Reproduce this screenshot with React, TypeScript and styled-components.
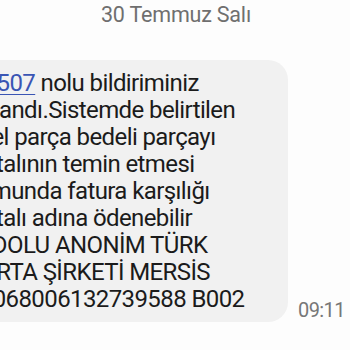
import React from "react";
import styled, { createGlobalStyle } from "styled-components";

const GlobalStyle = createGlobalStyle`
  html, body {
    margin: 0;
    padding: 0;
    background: #fdfdfd;
  }
  body {
    font-family: Roboto, "Noto Sans", "Liberation Sans", sans-serif;
  }
`;

const Screen = styled.div`
  width: 350px;
  height: 350px;
  overflow: hidden;
  display: flex;
  flex-direction: column;
  background: #fdfdfd;
`;

const DateLabel = styled.div`
  padding-top: 2px;
  padding-left: 2px;
  text-align: center;
  font-size: 21.5px;
  line-height: 25px;
  letter-spacing: -0.2px;
  color: #6f6f6f;
`;

const MessageRow = styled.div`
  display: flex;
  align-items: flex-end;
  margin-top: 33px;
  margin-left: -69px;
`;

const Bubble = styled.div`
  flex: 0 0 auto;
  width: 357px;
  box-sizing: border-box;
  padding: 10px 14px 9px 14px;
  background: #f1f1f1;
  border-radius: 20px;
  font-size: 24px;
  line-height: 27px;
  letter-spacing: -0.6px;
  color: #1b1b1b;
  white-space: nowrap;
`;

const Line = styled.div``;

const NumberLink = styled.span`
  color: #3a55b4;
  text-decoration: underline;
  text-decoration-thickness: 1px;
  text-underline-offset: 3px;
`;

const Time = styled.div`
  margin-left: 10px;
  margin-bottom: 2px;
  font-size: 20px;
  line-height: 20px;
  letter-spacing: -0.6px;
  color: #777777;
`;

const lines = [
  "onaylandı.Sistemde belirtilen",
  "model parça bedeli parçayı",
  "sigortalının temin etmesi",
  "durumunda fatura karşılığı",
  "sigortalı adına ödenebilir",
  "ANADOLU ANONİM TÜRK",
  "SİGORTA ŞİRKETİ MERSİS",
  "No:0068006132739588 B002",
];

const App = () => {
  return (
    <>
      <GlobalStyle />
      <Screen>
        <DateLabel>30 Temmuz Salı</DateLabel>
        <MessageRow>
          <Bubble>
            <Line>
              <NumberLink>1234507</NumberLink> nolu bildiriminiz
            </Line>
            {lines.map((text) => (
              <Line key={text}>{text}</Line>
            ))}
          </Bubble>
          <Time>09:11</Time>
        </MessageRow>
      </Screen>
    </>
  );
};

export default App;
